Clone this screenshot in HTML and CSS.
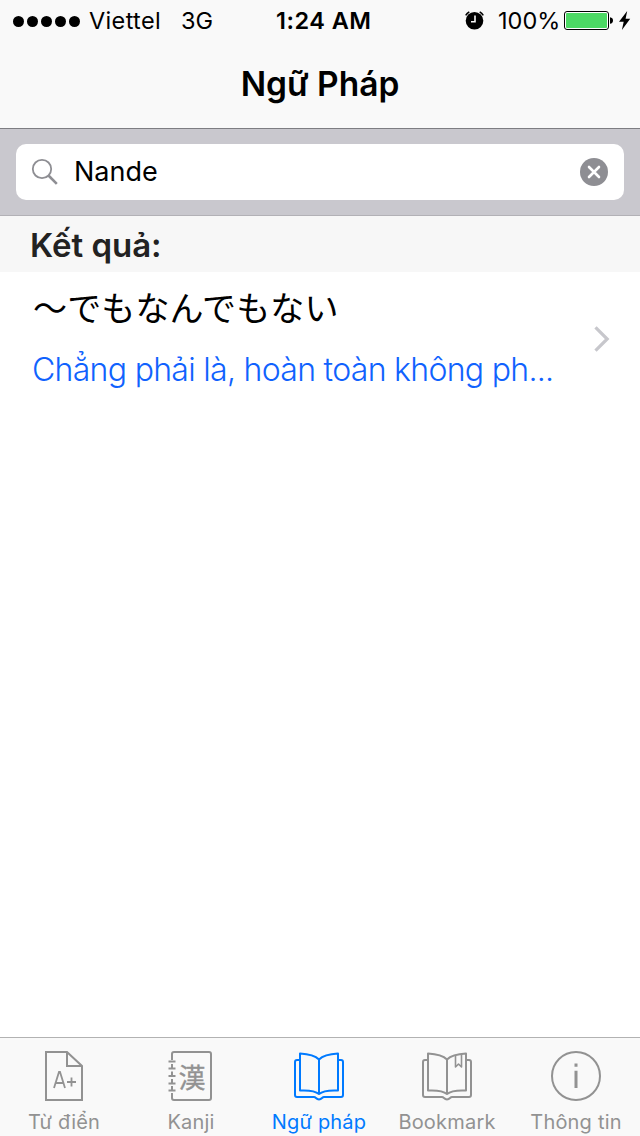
FILE: index.html
```html
<!DOCTYPE html>
<html lang="vi">
<head>
    <meta charset="UTF-8">
    <meta name="viewport" content="width=device-width, initial-scale=1.0">
    <title>Ngữ Pháp</title>
    <link rel="stylesheet" href="styles.css">
</head>
<body>

<header class="header">
    <div class="status-bar">
        <div class="status-left">
            <div class="signal"><i></i><i></i><i></i><i></i><i></i></div>
            <span class="carrier">Viettel</span>
            <span class="network">3G</span>
        </div>
        <span class="time">1:24 AM</span>
        <div class="status-right">
            <svg class="alarm" width="20" height="20" viewBox="0 0 20 20">
                <circle cx="9.500" cy="9.800" r="8.800"/>
                <path d="M.7 4.300A11 11 0 0 1 4.300 .9M14.700 .9a11 11 0 0 1 3.600 3.400" fill="none" stroke="#000" stroke-width="1.500"/>
                <path d="M10 4.500v6.200H6" fill="none" stroke="#f9f9f9" stroke-width="1.600"/>
            </svg>
            <span class="percent">100%</span>
            <svg class="battery" width="50" height="20" viewBox="0 0 50 20">
                <rect x=".5" y=".5" width="44" height="18" rx="2.5" fill="#fff" stroke="#000"/>
                <rect x="2" y="2" width="41" height="15" rx="1" fill="#4cd964"/>
                <path d="M46 6.200c2 .3 3 1.500 3 3.300s-1 3-3 3.300z"/>
            </svg>
            <svg class="bolt" width="12" height="20" viewBox="0 0 12 20">
                <path d="M8.200 0 0 10.800h4.700L2.900 19 11.200 7.700H6.600z"/>
            </svg>
        </div>
    </div>
    <h1 class="title">Ngữ Pháp</h1>
</header>

<div class="search-bar">
    <div class="search-field">
        <svg class="search-icon" width="28" height="28" viewBox="0 0 28 28" fill="none" stroke="#8e8e93">
            <circle cx="11" cy="11" r="9.200" stroke-width="1.800"/>
            <path d="m17.500 17.500 8.300 8.300" stroke-width="2.600"/>
        </svg>
        <span class="search-text">Nande</span>
        <svg class="clear-icon" width="28" height="28" viewBox="0 0 28 28">
            <circle cx="14" cy="14" r="14" fill="#8e8e93"/>
            <path d="m9 9 10 10M19 9 9 19" stroke="#fff" stroke-width="2.600" stroke-linecap="round"/>
        </svg>
    </div>
</div>

<main class="results">
    <h2 class="section-title">Kết quả:</h2>
    <div class="row">
        <div class="row-text">
            <div class="japanese" lang="ja">～でもなんでもない</div>
            <div class="meaning">Chẳng phải là, hoàn toàn không ph...</div>
        </div>
        <svg class="chevron" width="18" height="28" viewBox="0 0 18 28" fill="none" stroke="#c7c7cc" stroke-width="3.200">
            <path d="m1.500 2.300 11.700 11.700L1.500 25.700"/>
        </svg>
    </div>
</main>

<nav class="tab-bar">
    <div class="tab">
        <svg width="52" height="52" viewBox="0 0 52 52" fill="none" stroke="currentColor" stroke-width="2">
            <path d="M8 2h21l15 14v34H8zM29 2v14h15"/>
            <path d="m16 38 5-16h1l5 16M17.500 33h8M29 32h9M33.500 27.500v9" stroke-width="1.800"/>
        </svg>
        <span class="tab-label tab-dict">Từ điển</span>
    </div>
    <div class="tab">
        <svg width="52" height="52" viewBox="0 0 52 52" fill="none" stroke="currentColor" stroke-width="2">
            <path d="M6 10V4q0-2 2-2h35q2 0 2 2v44q0 2-2 2H8q-2 0-2-2v-5"/>
            <path d="M2.500 11.500h7M2.500 18.500h7M2.500 26h7M2.500 33.500h7M2.500 40.500h7M6 14v4M6 21.500v4M6 29v4M6 36v4"/>
            <text class="kanji" x="12.500" y="37.500">漢</text>
        </svg>
        <span class="tab-label tab-kanji">Kanji</span>
    </div>
    <div class="tab active">
        <svg width="52" height="52" viewBox="1 0 52 52" fill="none" stroke="currentColor" stroke-width="2" stroke-linejoin="round">
            <path d="M26 9.500C22 5.500 15 4 7 3.500v37c8-.4 15 0 19 3.500 4-3.500 11-3.900 19-3.500v-37c-8 .5-15 2-19 6zV44"/>
            <path d="M7 10H4q-2 0-2 2v33q0 2 2 2h17c2 0 2 2.500 5 2.500s3-2.500 5-2.500h17q2 0 2-2V12q0-2-2-2h-3"/>
        </svg>
        <span class="tab-label tab-grammar">Ngữ pháp</span>
    </div>
    <div class="tab">
        <svg width="52" height="52" viewBox="1 0 52 52" fill="none" stroke="currentColor" stroke-width="2" stroke-linejoin="round">
            <path d="M26 9.500C22 5.500 15 4 7 3.500v37c8-.4 15 0 19 3.500 4-3.500 11-3.900 19-3.500v-37c-8 .5-15 2-19 6zV44"/>
            <path d="M7 10H4q-2 0-2 2v33q0 2 2 2h17c2 0 2 2.500 5 2.500s3-2.500 5-2.500h17q2 0 2-2V12q0-2-2-2h-3"/>
            <path d="M34.500 5.500v11.500l3-3 3 3V4.500" stroke-width="1.600"/>
        </svg>
        <span class="tab-label tab-bookmark">Bookmark</span>
    </div>
    <div class="tab">
        <svg width="52" height="52" viewBox="0 0 52 52" fill="none" stroke="currentColor" stroke-width="2">
            <circle cx="26" cy="26" r="24"/>
            <path d="M26 13.500v3.200M26 20.800V38" stroke-width="3"/>
        </svg>
        <span class="tab-label tab-info">Thông tin</span>
    </div>
</nav>

</body>
</html>
```

FILE: styles.css
```css
* {
    box-sizing: border-box;
}
body {
    margin: 0;
    height: 1136px;
    display: flex;
    flex-direction: column;
    font-family: Inter, "Noto Sans CJK JP", sans-serif;
    background-color: #fff;
    color: #000;
    overflow: hidden;
    white-space: nowrap;
}
svg {
    display: block;
    flex-shrink: 0;
}
.header {
    height: 129px;
    background-color: #f9f9f9;
    border-bottom: 1px solid #7d7d82;
}
.status-bar {
    height: 40px;
    display: grid;
    grid-template-columns: 276px 1fr 175px;
    align-items: center;
    font-size: 23.5px;
    line-height: 42px;
}
.status-left, .status-right {
    display: flex;
    align-items: center;
}
.signal {
    display: flex;
    gap: 3px;
    margin: 0 9px 0 13px;
}
.signal i {
    width: 11px;
    height: 11px;
    border-radius: 50%;
    background-color: #000;
}
.carrier {
    letter-spacing: 0.35px;
}
.network {
    margin-left: 20px;
}
.time {
    font-weight: 600;
    letter-spacing: 0.5px;
}
.percent {
    margin-left: 13px;
    width: 66px;
}
.bolt {
    margin-left: 5px;
}
.title {
    margin: 0;
    font-size: 33.5px;
    font-weight: 600;
    line-height: 88px;
    text-align: center;
}
.search-bar {
    height: 87px;
    padding: 15px 16px;
    background-color: #c9c8ce;
    border-bottom: 1px solid #b2b1b6;
}
.search-field {
    height: 56px;
    display: flex;
    align-items: center;
    padding: 0 16px 0 15px;
    background-color: #fff;
    border-radius: 10px;
}
.search-text {
    flex: 1;
    padding: 0 0 2px 15px;
    font-size: 27px;
}
.results {
    flex: 1;
}
.section-title {
    margin: 0;
    height: 56px;
    padding-left: 30px;
    background-color: #f7f7f7;
    color: #222;
    font-size: 33px;
    font-weight: 600;
    line-height: 58px;
}
.row {
    height: 134px;
    display: flex;
    align-items: center;
    justify-content: space-between;
    padding: 0 28px 0 32px;
}
.japanese {
    margin-left: 1px;
    padding-bottom: 5px;
    font-family: "Noto Sans CJK JP", sans-serif;
    font-size: 34px;
    line-height: 57px;
    letter-spacing: 0.15px;
}
.meaning {
    color: #1062fe;
    font-size: 32px;
    font-weight: 300;
    line-height: 60px;
    letter-spacing: -0.7px;
}
.tab-bar {
    height: 99px;
    display: flex;
    background-color: #f9f9f9;
    border-top: 1px solid #b2b2b2;
}
.tab {
    flex: 1;
    display: flex;
    flex-direction: column;
    align-items: center;
    padding-top: 12px;
    color: #929292;
}
.active {
    color: #007aff;
}
.tab-label {
    margin-top: 5px;
    font-size: 20px;
    line-height: 30px;
    letter-spacing: 0.2px;
}
.tab-kanji, .tab-grammar, .tab-bookmark {
    padding-right: 2px;
}
.kanji {
    font-family: "Noto Sans CJK JP", sans-serif;
    font-size: 27px;
    fill: currentColor;
    stroke: currentColor;
    stroke-width: 0.3px;
}
```
